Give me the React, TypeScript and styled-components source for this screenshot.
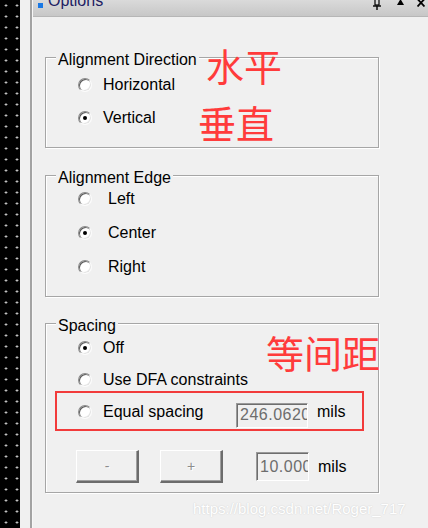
import styled, { createGlobalStyle } from "styled-components";

const GlobalStyle = createGlobalStyle`
  html, body {
    margin: 0;
    padding: 0;
    background: #f0f0f0;
    overflow: hidden;
  }
  body {
    font-family: "Liberation Sans", Arial, sans-serif;
  }
`;

const Frame = styled.div`
  position: relative;
  display: flex;
  width: 428px;
  height: 528px;
  overflow: hidden;
  background: #f0f0f0;
`;

const DotStrip = styled.div`
  flex: 0 0 20px;
  background-color: #000;
  background-image: radial-gradient(circle, #e6e6e6 0.8px, transparent 1.4px);
  background-size: 11px 11px;
  background-position: 0.5px 0;
`;

const Gutter = styled.div`
  flex: 0 0 12px;
  box-sizing: border-box;
  border-right: 2px solid #a3a3a3;
`;

const Pane = styled.div`
  flex: 1;
  min-width: 0;
  display: flex;
  flex-direction: column;
  border-left: 1px solid #f7f7f7;
`;

const TitleBar = styled.div`
  height: 16px;
  display: flex;
  align-items: flex-start;
  background: linear-gradient(#dadada, #c7c7c7);
  border-bottom: 1px solid #b6b6b6;
`;

const TitleIcon = styled.span`
  width: 5px;
  height: 5px;
  margin: 3px 0 0 5px;
  background: #1a78e4;
`;

const TitleText = styled.span`
  margin: -7px 0 0 5px;
  font-size: 16px;
  line-height: 16px;
  color: #1d2163;
`;

const TitleButtons = styled.div`
  margin-left: auto;
  padding-right: 3px;
  display: flex;
  align-items: flex-start;
`;

const TitleGlyph = styled.svg<{ $gap: number }>`
  display: block;
  margin-left: ${(p) => p.$gap}px;
`;

const Body = styled.div`
  display: flex;
  flex-direction: column;
  padding-left: 12px;
`;

const GroupBox = styled.div<{ $mt: number; $pt: number; $pb: number }>`
  position: relative;
  box-sizing: border-box;
  width: 334px;
  margin-top: ${(p) => p.$mt}px;
  padding: ${(p) => p.$pt}px 0 ${(p) => p.$pb}px 32px;
  border: 1px solid #a6a6a6;
  box-shadow: 1px 1px 0 #ffffff, inset 1px 1px 0 #ffffff;
`;

const Caption = styled.span`
  position: absolute;
  top: -7px;
  left: 10px;
  padding: 0 2px;
  background: #f0f0f0;
  font-size: 16px;
  line-height: 18px;
  color: #000;
  white-space: nowrap;
`;

const Row = styled.div<{ $h: number; $marked?: boolean }>`
  position: relative;
  display: flex;
  align-items: center;
  height: ${(p) => p.$h}px;

  ${(p) =>
    p.$marked &&
    `
    &::after {
      content: "";
      position: absolute;
      left: -23px;
      top: -5px;
      width: 309px;
      height: 40px;
      box-sizing: border-box;
      border: 2px solid #f23b3b;
      pointer-events: none;
    }
  `}
`;

const Radio = styled.span<{ $checked?: boolean }>`
  position: relative;
  flex: 0 0 14px;
  height: 14px;
  box-sizing: border-box;
  border-radius: 50%;
  background: #fff;
  border: 1px solid;
  border-color: #8a8a8a #fbfbfb #fbfbfb #8a8a8a;
  box-shadow: inset 1px 1px 0 #5a5a5a, inset -1px -1px 0 #e3e3e3;

  &::after {
    content: "";
    display: ${(p) => (p.$checked ? "block" : "none")};
    position: absolute;
    left: 4px;
    top: 4px;
    width: 4px;
    height: 4px;
    border-radius: 50%;
    background: #000;
  }
`;

const Label = styled.span<{ $gap: number; $w?: number }>`
  margin-left: ${(p) => p.$gap}px;
  ${(p) => (p.$w ? `flex: 0 0 ${p.$w}px;` : "")}
  font-size: 16px;
  line-height: 18px;
  color: #000;
  white-space: nowrap;
`;

const Field = styled.input<{ $w: number; $h: number; $mt?: number; $ml?: number }>`
  box-sizing: border-box;
  width: ${(p) => p.$w}px;
  height: ${(p) => p.$h}px;
  margin: ${(p) => p.$mt ?? 0}px 0 0 ${(p) => p.$ml ?? 0}px;
  padding: 0 0 0 3px;
  font-family: inherit;
  font-size: 16px;
  letter-spacing: 0.5px;
  color: #6d6d6d;
  background: #f0f0f0;
  border: 1px solid;
  border-color: #9a9a9a #ffffff #ffffff #9a9a9a;
  box-shadow: inset 1px 1px 0 #6e6e6e;
  outline: none;
`;

const Unit = styled.span`
  margin-left: 9px;
  font-size: 16px;
  color: #000;
`;

const ButtonRow = styled.div`
  display: flex;
  align-items: center;
  margin: 22px 0 0 -2px;
  height: 33px;
`;

const StepButton = styled.button<{ $ml?: number }>`
  box-sizing: border-box;
  width: 63px;
  height: 33px;
  margin-left: ${(p) => p.$ml ?? 0}px;
  padding: 0;
  background: #f0f0f0;
  border-style: solid;
  border-width: 1px 2px 2px 1px;
  border-color: #ffffff #6c6c6c #6c6c6c #ffffff;
  box-shadow: inset -1px -1px 0 #a0a0a0;
  font-family: inherit;
  font-size: 14px;
  color: #8d8d8d;
  text-shadow: 1px 1px 0 #fff;
`;

const Watermark = styled.div`
  margin: 7px 0 0 148px;
  font-size: 15px;
  line-height: 18px;
  color: #ffffff;
  text-shadow: 0 0 1.5px rgba(0, 0, 0, 0.18);
  white-space: nowrap;
`;

const Note = styled.span<{ $x: number; $y: number }>`
  position: absolute;
  left: ${(p) => p.$x}px;
  top: ${(p) => p.$y}px;
  font-family: "Noto Sans CJK SC", sans-serif;
  font-size: 38px;
  line-height: 1;
  color: #ff3b3b;
  white-space: nowrap;
`;

const App = () => {
  return (
    <Frame>
      <GlobalStyle />
      <DotStrip />
      <Gutter />
      <Pane>
        <TitleBar>
          <TitleIcon />
          <TitleText>Options</TitleText>
          <TitleButtons>
            <TitleGlyph $gap={0} width="8" height="10" viewBox="0 0 8 10">
              <rect x="2" y="-2" width="4" height="7" fill="#d8d8d8" stroke="#000" strokeWidth="1.2" />
              <line x1="0" y1="6" x2="8" y2="6" stroke="#000" strokeWidth="1.4" />
              <line x1="4" y1="6" x2="4" y2="10" stroke="#000" strokeWidth="1.4" />
            </TitleGlyph>
            <TitleGlyph $gap={16} width="7" height="5" viewBox="0 0 7 5">
              <polygon points="3.5,-1 7,5 0,5" fill="#000" />
            </TitleGlyph>
            <TitleGlyph $gap={13} width="8" height="7" viewBox="0 0 8 7">
              <path d="M0.5 -1 L7.5 6.5 M7.5 -1 L0.5 6.5" stroke="#000" strokeWidth="1.8" />
            </TitleGlyph>
          </TitleButtons>
        </TitleBar>

        <Body>
          <GroupBox $mt={40} $pt={10} $pb={13}>
            <Caption>Alignment Direction</Caption>
            <Row $h={33}>
              <Radio />
              <Label $gap={11}>Horizontal</Label>
            </Row>
            <Row $h={33}>
              <Radio $checked />
              <Label $gap={11}>Vertical</Label>
            </Row>
          </GroupBox>

          <GroupBox $mt={27} $pt={6} $pb={12}>
            <Caption>Alignment Edge</Caption>
            <Row $h={34}>
              <Radio />
              <Label $gap={16}>Left</Label>
            </Row>
            <Row $h={34}>
              <Radio $checked />
              <Label $gap={16}>Center</Label>
            </Row>
            <Row $h={34}>
              <Radio />
              <Label $gap={16}>Right</Label>
            </Row>
          </GroupBox>

          <GroupBox $mt={26} $pt={8} $pb={9}>
            <Caption>Spacing</Caption>
            <Row $h={32}>
              <Radio $checked />
              <Label $gap={11}>Off</Label>
            </Row>
            <Row $h={32}>
              <Radio />
              <Label $gap={11}>Use DFA constraints</Label>
            </Row>
            <Row $h={32} $marked>
              <Radio />
              <Label $gap={11} $w={133}>Equal spacing</Label>
              <Field $w={72} $h={25} $mt={6} value="246.0620" readOnly />
              <Unit>mils</Unit>
            </Row>
            <ButtonRow>
              <StepButton disabled>-</StepButton>
              <StepButton disabled $ml={21}>+</StepButton>
              <Field $w={53} $h={29} $ml={33} value="10.000" readOnly />
              <Unit>mils</Unit>
            </ButtonRow>
          </GroupBox>

          <Watermark>https://blog.csdn.net/Roger_717</Watermark>
        </Body>
      </Pane>

      <Note $x={206} $y={46}>水平</Note>
      <Note $x={198} $y={103}>垂直</Note>
      <Note $x={266} $y={333}>等间距</Note>
    </Frame>
  );
};

export default App;
